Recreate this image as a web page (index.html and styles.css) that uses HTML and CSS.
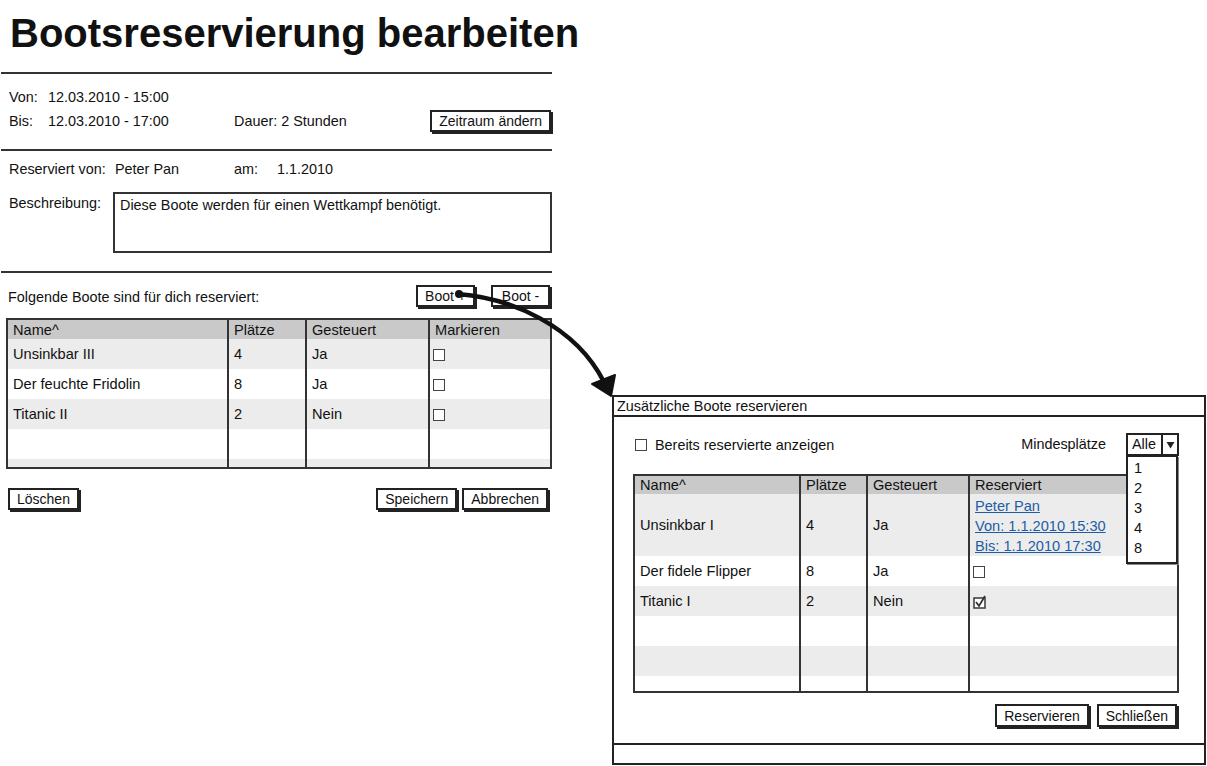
FILE: index.html
```html
<!DOCTYPE html>
<html lang="de">
<head>
<meta charset="utf-8">
<title>Bootsreservierung bearbeiten</title>
<link rel="stylesheet" href="styles.css">
</head>
<body>
<div class="page">
  <main class="editor">
    <h1 class="title">Bootsreservierung bearbeiten</h1>

    <section class="sec sec-time">
      <div class="row">
        <span class="lbl lbl-short">Von:</span>
        <span class="val val-date">12.03.2010 - 15:00</span>
      </div>
      <div class="row">
        <span class="lbl lbl-short">Bis:</span>
        <span class="val val-date">12.03.2010 - 17:00</span>
        <span class="val">Dauer: 2 Stunden</span>
        <button class="btn btn-end">Zeitraum ändern</button>
      </div>
    </section>

    <section class="sec sec-owner">
      <div class="row row-owner">
        <span class="lbl lbl-long">Reserviert von:</span>
        <span class="val val-name">Peter Pan</span>
        <span class="lbl lbl-am">am:</span>
        <span class="val">1.1.2010</span>
      </div>
      <div class="row row-desc">
        <span class="lbl lbl-desc">Beschreibung:</span>
        <div class="textarea">Diese Boote werden für einen Wettkampf benötigt.</div>
      </div>
    </section>

    <section class="sec sec-boats">
      <div class="row row-boats">
        <span class="boats-label">Folgende Boote sind für dich reserviert:</span>
        <div class="btn-group btn-group-boot">
          <button class="btn btn-boot">Boot +</button>
          <button class="btn btn-boot">Boot -</button>
        </div>
      </div>

      <table class="grid grid-left">
        <colgroup>
          <col class="c-l1"><col class="c-l2"><col class="c-l3"><col class="c-l4">
        </colgroup>
        <thead>
          <tr><th>Name^</th><th>Plätze</th><th>Gesteuert</th><th>Markieren</th></tr>
        </thead>
        <tbody>
          <tr><td>Unsinkbar III</td><td>4</td><td>Ja</td><td class="cb-cell"><span class="cb"></span></td></tr>
          <tr><td>Der feuchte Fridolin</td><td>8</td><td>Ja</td><td class="cb-cell"><span class="cb"></span></td></tr>
          <tr><td>Titanic II</td><td>2</td><td>Nein</td><td class="cb-cell"><span class="cb"></span></td></tr>
          <tr><td></td><td></td><td></td><td></td></tr>
          <tr class="stub stub-left"><td></td><td></td><td></td><td></td></tr>
        </tbody>
      </table>

      <div class="actions actions-left">
        <button class="btn">Löschen</button>
        <div class="btn-group btn-group-tight">
          <button class="btn">Speichern</button>
          <button class="btn">Abbrechen</button>
        </div>
      </div>
    </section>
  </main>

  <aside class="dialog">
    <div class="dlg-title">Zusätzliche Boote reservieren</div>
    <div class="dlg-body">
      <div class="dlg-top">
        <label class="chk-label"><span class="cb"></span>Bereits reservierte anzeigen</label>
        <span class="min-label">Mindesplätze</span>
        <div class="combo">
          <span class="combo-val">Alle</span>
          <span class="combo-btn">
            <svg width="9" height="8" viewBox="0 0 9 8"><path d="M0.5 1 L8.5 1 L4.5 7.5 Z" fill="#222"/></svg>
          </span>
          <ul class="combo-list">
            <li>1</li><li>2</li><li>3</li><li>4</li><li>8</li>
          </ul>
        </div>
      </div>

      <table class="grid grid-right">
        <colgroup>
          <col class="c-r1"><col class="c-r2"><col class="c-r3"><col class="c-r4">
        </colgroup>
        <thead>
          <tr><th>Name^</th><th>Plätze</th><th>Gesteuert</th><th>Reserviert</th></tr>
        </thead>
        <tbody>
          <tr class="tall">
            <td>Unsinkbar I</td><td>4</td><td>Ja</td>
            <td class="links">
              <a href="#">Peter Pan</a>
              <a href="#">Von: 1.1.2010 15:30</a>
              <a href="#">Bis: 1.1.2010 17:30</a>
            </td>
          </tr>
          <tr><td>Der fidele Flipper</td><td>8</td><td>Ja</td><td class="cb-cell"><span class="cb"></span></td></tr>
          <tr><td>Titanic I</td><td>2</td><td>Nein</td><td class="cb-cell">
            <svg class="cb-checked" width="14" height="14" viewBox="0 0 14 14"><rect x="1" y="3" width="11" height="10" fill="#fff" stroke="#444" stroke-width="1.6"/><path d="M3 7 L6 11 L12 1" fill="none" stroke="#333" stroke-width="1.8"/></svg>
          </td></tr>
          <tr><td></td><td></td><td></td><td></td></tr>
          <tr><td></td><td></td><td></td><td></td></tr>
          <tr class="stub stub-right"><td></td><td></td><td></td><td></td></tr>
        </tbody>
      </table>

      <div class="actions actions-right">
        <button class="btn">Reservieren</button>
        <button class="btn">Schließen</button>
      </div>
    </div>
    <div class="dlg-status"></div>
  </aside>

  <svg class="arrow" width="1207" height="766" viewBox="0 0 1207 766" aria-hidden="true">
    <path d="M458 294 C 510 298, 575 325, 604 382" fill="none" stroke="#111" stroke-width="4.5" stroke-linecap="round"/>
    <circle cx="459" cy="294" r="4" fill="#111"/>
    <path d="M611 396 L592 384 L615 375 Z" fill="#111" stroke="#111" stroke-width="2" stroke-linejoin="round"/>
  </svg>
</div>
</body>
</html>
```

FILE: styles.css
```css
* { box-sizing: border-box; }

body {
  margin: 0;
  background: #fff;
  color: #111;
  font-family: "Liberation Sans", Arial, sans-serif;
  font-size: 14.4px;
}

.page {
  position: relative;
  width: 1207px;
  height: 766px;
  overflow: hidden;
  display: flex;
  align-items: flex-start;
}

/* ---------- left editor ---------- */
.editor {
  width: 552px;
  flex: none;
}

.title {
  margin: 0;
  height: 72px;
  padding: 8px 0 0 10px;
  font-size: 40px;
  line-height: 50px;
  font-weight: bold;
  white-space: nowrap;
}

.sec {
  border-top: 2px solid #333;
  margin-left: 1px;
}

.row {
  display: flex;
  align-items: center;
  height: 24px;
  white-space: nowrap;
}

.sec-time {
  height: 77px;
  padding: 11px 1px 0 8px;
}

.lbl-short { width: 39px; }
.val-date { width: 186px; }

.btn-end { margin-left: auto; }

.sec-owner {
  height: 122px;
  padding: 7px 0 0 8px;
}

.row-owner { height: 22px; }
.lbl-long { width: 106px; }
.val-name { width: 119px; }
.lbl-am { width: 43px; }

.row-desc {
  margin-top: 12px;
  height: 61px;
  align-items: flex-start;
}

.lbl-desc {
  width: 104px;
  line-height: 22px;
}

.textarea {
  flex: 1;
  height: 61px;
  border: 2px solid #333;
  padding: 3px 5px;
  line-height: 16px;
}

.sec-boats {
  padding: 12px 0 0 5px;
}

.boats-label { margin-left: 2px; }

.btn-group {
  margin-left: auto;
  display: flex;
  gap: 16px;
  align-self: flex-start;
}

.btn-group-boot { margin-right: 2px; }

.btn-group-tight { gap: 5px; }

.btn {
  font-family: inherit;
  font-size: 14px;
  color: #111;
  background: #fff;
  border: 2px solid #222;
  box-shadow: 2px 2px 0 #222;
  height: 22px;
  padding: 0 7px;
  line-height: 18px;
  cursor: pointer;
  white-space: nowrap;
}

.btn-boot { width: 59px; padding: 0; }

/* ---------- tables ---------- */
.grid {
  border-collapse: separate;
  border-spacing: 0;
  table-layout: fixed;
  width: 546px;
  border: 2px solid #333;
  font-size: 14.6px;
}

.grid th,
.grid td {
  padding: 0 5px;
  text-align: left;
  font-weight: normal;
  white-space: nowrap;
  overflow: hidden;
  vertical-align: middle;
}

.grid th + th,
.grid td + td {
  border-left: 2px solid #333;
}

.grid th {
  background: #c9c9c9;
  height: 19px;
  line-height: 18px;
}

.grid td { height: 30px; }

.grid td.cb-cell { padding-left: 3px; }

.grid tbody tr:nth-child(odd) td { background: #ececec; }

.grid-left { margin-top: 9px; }

.c-l1 { width: 219px; }
.c-l2 { width: 78px; }
.c-l3 { width: 123px; }
.c-l4 { width: 122px; }

.stub-left td { height: 8px; }

.cb {
  display: inline-block;
  width: 12px;
  height: 12px;
  border: 1.6px solid #444;
  background: #fff;
  vertical-align: middle;
}

.cb-checked { vertical-align: middle; }

.actions {
  display: flex;
  align-items: flex-start;
}

.actions-left {
  margin-top: 19px;
  padding-left: 2px;
  justify-content: space-between;
  padding-right: 4px;
}

/* ---------- dialog ---------- */
.dialog {
  flex: none;
  width: 594px;
  height: 370px;
  margin: 395px 0 0 60px;
  border: 2px solid #222;
  display: flex;
  flex-direction: column;
  background: #fff;
}

.dlg-title {
  height: 20px;
  border-bottom: 2px solid #222;
  padding-left: 3px;
  line-height: 18px;
}

.dlg-body {
  flex: 1;
  padding: 16px 25px 0 19px;
}

.dlg-status {
  height: 20px;
  border-top: 2px solid #222;
}

.dlg-top {
  display: flex;
  align-items: center;
  height: 23px;
  white-space: nowrap;
}

.chk-label {
  display: flex;
  align-items: center;
  gap: 8px;
  padding-left: 2px;
  margin-top: 1px;
}

.min-label {
  margin-left: auto;
  margin-right: 20px;
  margin-top: -2px;
}

.combo {
  position: relative;
  width: 53px;
  height: 23px;
  border: 2px solid #222;
  display: flex;
  background: #fff;
}

.combo-val {
  flex: 1;
  padding-left: 4px;
  line-height: 19px;
}

.combo-btn {
  width: 16px;
  border-left: 2px solid #222;
  display: flex;
  align-items: center;
  justify-content: center;
}

.combo-list {
  position: absolute;
  top: 21px;
  left: -2px;
  width: 52px;
  height: 108px;
  margin: 0;
  padding: 1px 0 0 6px;
  list-style: none;
  background: #fff;
  border: 2px solid #222;
  border-top-width: 1px;
  box-shadow: 1px 1px 0 #888;
  z-index: 2;
}

.combo-list li {
  line-height: 20px;
  font-size: 14.6px;
}

.grid-right { margin-top: 18px; }

.grid-right th { height: 18px; }

.c-r1 { width: 164px; }
.c-r2 { width: 67px; }
.c-r3 { width: 102px; }
.c-r4 { width: 209px; }

.grid-right .tall td { height: 62px; }

.grid-right .tall td.links {
  height: auto;
  vertical-align: top;
  padding-top: 2px;
}

.links a {
  display: block;
  color: #1c5da5;
  text-decoration: underline;
  line-height: 20px;
}

.stub-right td { height: 15px; }

.actions-right {
  margin-top: 11px;
  justify-content: flex-end;
  gap: 8px;
  padding-right: 2px;
}

.actions-right .btn { height: 23px; }

/* ---------- connector arrow ---------- */
.arrow {
  position: absolute;
  top: 0;
  left: 0;
  pointer-events: none;
  z-index: 5;
}
```
